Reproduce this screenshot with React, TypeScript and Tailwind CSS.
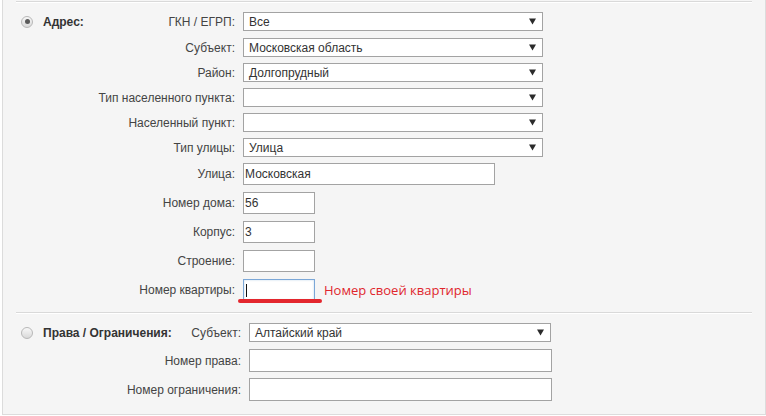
import React from "react";

const font = { fontFamily: '"Liberation Sans", Arial, sans-serif' };

function Arrow() {
  return (
    <svg width="7" height="7" viewBox="0 0 7 7" className="shrink-0">
      <path d="M0 0.5 H7 L3.5 6.5 Z" fill="#2b2b2b" />
    </svg>
  );
}

function Select({ value, w }: { value?: string; w: string }) {
  return (
    <div
      className={`${w} h-[19px] border border-[#a3a3a3] bg-white flex items-center justify-between pl-[5px] pr-[6px] text-[12px] text-[#333]`}
    >
      <span className="leading-none">{value ?? ""}</span>
      <Arrow />
    </div>
  );
}

function Input({ value, w, h = "h-[22px]" }: { value?: string; w: string; h?: string }) {
  return (
    <div
      className={`${w} ${h} border border-[#a3a3a3] bg-white flex items-center pl-[1px] text-[12px] text-[#333]`}
    >
      <span className="leading-none">{value ?? ""}</span>
    </div>
  );
}

function Radio({ checked }: { checked?: boolean }) {
  return (
    <div className="w-[12px] h-[12px] rounded-full border border-[#b8b8b8] bg-gradient-to-b from-[#f8f8f8] to-[#d9d9d9] flex items-center justify-center shrink-0">
      {checked && <div className="w-[5px] h-[5px] rounded-full bg-[#5a5a5a]" />}
    </div>
  );
}

function Row({
  label,
  labelW,
  children,
  lead,
}: {
  label: string;
  labelW: string;
  children: React.ReactNode;
  lead?: React.ReactNode;
}) {
  return (
    <div className="flex items-center">
      <div className={`${labelW} flex items-center justify-between shrink-0`}>
        <div className="flex items-center">{lead}</div>
        <span className="text-[12px] text-[#444] leading-none whitespace-nowrap">{label}</span>
      </div>
      <div className="ml-[8px] flex items-center">{children}</div>
    </div>
  );
}

function Separator() {
  return <div className="h-[2px] border-t border-[#d9d9d9] border-b border-b-white" />;
}

export default function App() {
  const lead1 = (
    <div className="flex items-center pl-[5px]">
      <Radio checked />
      <span className="ml-[10px] text-[12px] font-bold text-[#333] leading-none">Адрес:</span>
    </div>
  );
  const lead2 = (
    <div className="flex items-center pl-[5px]">
      <Radio />
      <span className="ml-[10px] text-[12px] font-bold text-[#333] leading-none">
        Права / Ограничения:
      </span>
    </div>
  );
  return (
    <div className="w-[766px] h-[416px] bg-white" style={font}>
      <div className="ml-[2px] w-[764px] h-[415px] border-x border-b border-[#dcdcdc] bg-[#f5f5f5] px-[13px] pt-[1px]">
        <Separator />
        {/* Section 1 */}
        <div className="pt-[9px] pb-[11px] flex flex-col">
          <div className="flex flex-col gap-[6px]">
            <div className="mb-[1px]">
              <Row label="ГКН / ЕГРП:" labelW="w-[219px]" lead={lead1}>
                <Select w="w-[300px]" value="Все" />
              </Row>
            </div>
            <Row label="Субъект:" labelW="w-[219px]">
              <Select w="w-[300px]" value="Московская область" />
            </Row>
            <Row label="Район:" labelW="w-[219px]">
              <Select w="w-[300px]" value="Долгопрудный" />
            </Row>
            <Row label="Тип населенного пункта:" labelW="w-[219px]">
              <Select w="w-[300px]" />
            </Row>
            <Row label="Населенный пункт:" labelW="w-[219px]">
              <Select w="w-[300px]" />
            </Row>
            <Row label="Тип улицы:" labelW="w-[219px]">
              <Select w="w-[300px]" value="Улица" />
            </Row>
          </div>
          <div className="mt-[6px] flex flex-col gap-[7px]">
            <Row label="Улица:" labelW="w-[219px]">
              <Input w="w-[252px]" value="Московская" />
            </Row>
            <Row label="Номер дома:" labelW="w-[219px]">
              <Input w="w-[72px]" value="56" />
            </Row>
            <Row label="Корпус:" labelW="w-[219px]">
              <Input w="w-[72px]" value="3" />
            </Row>
            <Row label="Строение:" labelW="w-[219px]">
              <Input w="w-[72px]" />
            </Row>
            <Row label="Номер квартиры:" labelW="w-[219px]">
              <div className="relative w-[72px] h-[22px] border border-[#7ba7d7] bg-white shadow-[inset_0_0_2px_rgba(120,165,215,0.5)]">
                <div className="absolute left-[2px] top-[4px] w-[1px] h-[13px] bg-[#111]" />
                <div className="absolute left-[-6px] top-[19px] w-[84px] h-[4px] rounded-full bg-[#e3262d]" />
              </div>
              <span
                className="ml-[9px] text-[13px] text-[#e0262d] leading-none"
                style={{ fontFamily: '"Open Sans", "Noto Sans", sans-serif' }}
              >
                Номер своей квартиры
              </span>
            </Row>
          </div>
        </div>
        <Separator />
        {/* Section 2 */}
        <div className="pt-[9px] flex flex-col">
          <Row label="Субъект:" labelW="w-[225px]" lead={lead2}>
            <Select w="w-[302px]" value="Алтайский край" />
          </Row>
          <div className="mt-[7px] flex flex-col gap-[6px]">
            <Row label="Номер права:" labelW="w-[225px]">
              <Input w="w-[303px]" h="h-[23px]" />
            </Row>
            <Row label="Номер ограничения:" labelW="w-[225px]">
              <Input w="w-[303px]" h="h-[23px]" />
            </Row>
          </div>
        </div>
      </div>
    </div>
  );
}
